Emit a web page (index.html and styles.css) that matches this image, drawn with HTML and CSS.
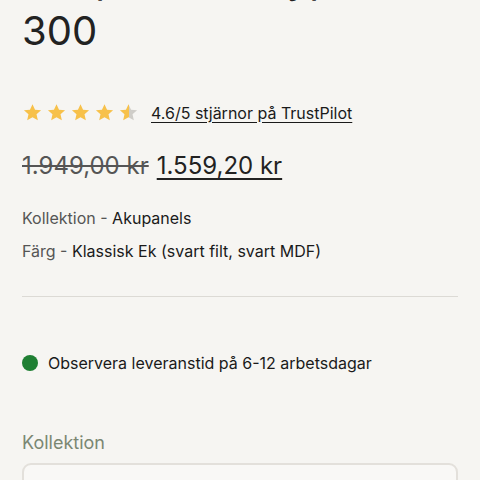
FILE: index.html
```html
<!DOCTYPE html>
<html lang="sv">
<head>
  <meta charset="UTF-8">
  <meta name="viewport" content="width=device-width, initial-scale=1.0">
  <title>Akupanel</title>
  <link rel="stylesheet" href="styles.css">
</head>
<body>
  <main class="product">
    <h1 class="product-title">Akupanel Ek-typ Svart 300</h1>

    <div class="rating">
      <div class="stars">
        <svg viewBox="0 0 24 24"><path class="star-fill" d="M12 2.5l2.9 6.3 6.9.7-5.2 4.6 1.5 6.8L12 17.4l-6.1 3.5 1.5-6.8-5.2-4.6 6.9-.7z"/></svg>
        <svg viewBox="0 0 24 24"><path class="star-fill" d="M12 2.5l2.9 6.3 6.9.7-5.2 4.6 1.5 6.8L12 17.4l-6.1 3.5 1.5-6.8-5.2-4.6 6.9-.7z"/></svg>
        <svg viewBox="0 0 24 24"><path class="star-fill" d="M12 2.5l2.9 6.3 6.9.7-5.2 4.6 1.5 6.8L12 17.4l-6.1 3.5 1.5-6.8-5.2-4.6 6.9-.7z"/></svg>
        <svg viewBox="0 0 24 24"><path class="star-fill" d="M12 2.5l2.9 6.3 6.9.7-5.2 4.6 1.5 6.8L12 17.4l-6.1 3.5 1.5-6.8-5.2-4.6 6.9-.7z"/></svg>
        <svg viewBox="0 0 24 24">
          <defs>
            <linearGradient id="half">
              <stop offset="55%" stop-color="#f7c14a"/>
              <stop offset="55%" stop-color="#cfcdc8"/>
            </linearGradient>
          </defs>
          <path fill="url(#half)" d="M12 2.5l2.9 6.3 6.9.7-5.2 4.6 1.5 6.8L12 17.4l-6.1 3.5 1.5-6.8-5.2-4.6 6.9-.7z"/>
        </svg>
      </div>
      <a href="#" class="rating-link">4.6/5 stjärnor på TrustPilot</a>
    </div>

    <div class="price">
      <s class="price-old">1.949,00 kr</s>
      <a href="#" class="price-new">1.559,20 kr</a>
    </div>

    <div class="specs">
      <p><span class="spec-key">Kollektion -</span> Akupanels</p>
      <p><span class="spec-key">Färg -</span> Klassisk Ek (svart filt, svart MDF)</p>
    </div>

    <hr class="divider">

    <p class="stock"><span class="stock-dot"></span>Observera leveranstid på 6-12 arbetsdagar</p>

    <label class="field-label" for="collection">Kollektion</label>
    <div class="select-box" id="collection"></div>
  </main>
</body>
</html>
```

FILE: styles.css
```css
* {
  margin: 0;
  padding: 0;
  box-sizing: border-box;
}

body {
  font-family: 'Inter', 'Noto Sans', sans-serif;
  background-color: #f6f5f2;
  color: #1a1a1a;
}

.product {
  padding: 0 22px;
  display: flex;
  flex-direction: column;
}

.product-title {
  font-size: 40px;
  font-weight: 400;
  line-height: 52px;
  color: #222;
  margin-top: -47px;
}

.rating {
  display: flex;
  align-items: center;
  gap: 12px;
  margin-top: 45px;
}

.stars {
  display: flex;
  gap: 3px;
}

.stars svg {
  width: 21px;
  height: 21px;
}

.star-fill {
  fill: #f7c14a;
}

.rating-link {
  font-size: 16px;
  color: #1a1a1a;
  text-decoration: underline;
  text-underline-offset: 3px;
}

.price {
  display: flex;
  align-items: baseline;
  gap: 8px;
  margin-top: 28px;
  font-size: 24px;
}

.price-old {
  color: #555;
}

.price-new {
  color: #222;
  text-decoration: underline;
  text-underline-offset: 4px;
  text-decoration-thickness: 2px;
}

.specs {
  margin-top: 27px;
  display: flex;
  flex-direction: column;
  gap: 11px;
  font-size: 16px;
  line-height: 22px;
}

.spec-key {
  color: #555;
}

.divider {
  border: none;
  border-top: 1px solid #dcdad5;
  margin-top: 34px;
}

.stock {
  display: flex;
  align-items: center;
  gap: 10px;
  margin-top: 55px;
  font-size: 16px;
  line-height: 22px;
}

.stock-dot {
  width: 16px;
  height: 16px;
  border-radius: 50%;
  background-color: #1f7f33;
}

.field-label {
  margin-top: 58px;
  font-size: 18px;
  color: #7b8773;
}

.select-box {
  margin-top: 10px;
  height: 52px;
  border: 2px solid #e3e0db;
  border-radius: 9px;
  background-color: #f9f8f6;
}
```
